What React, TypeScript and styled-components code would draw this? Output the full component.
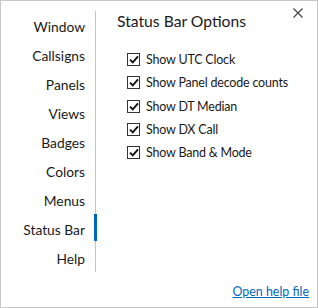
import React, { useState } from 'react'
import styled, { createGlobalStyle } from 'styled-components'

const NAV_ITEMS = [
    'Window',
    'Callsigns',
    'Panels',
    'Views',
    'Badges',
    'Colors',
    'Menus',
    'Status Bar',
    'Help',
]

const OPTIONS = [
    'Show UTC Clock',
    'Show Panel decode counts',
    'Show DT Median',
    'Show DX Call',
    'Show Band & Mode',
]

const GlobalStyle = createGlobalStyle`
    html, body {
        margin: 0;
        padding: 0;
        background: #ffffff;
    }
    body {
        font-family: Lato, "Noto Sans", sans-serif;
        color: #1a1a1a;
    }
`

const Dialog = styled.div`
    box-sizing: border-box;
    width: 318px;
    height: 308px;
    border: 1px solid #c9c9c9;
    display: grid;
    grid-template-columns: 95px 1fr;
    grid-template-rows: 1fr auto;
    position: relative;
    background: #ffffff;
`

const Sidebar = styled.nav`
    display: flex;
    flex-direction: column;
    align-items: stretch;
    margin-top: 10px;
    align-self: start;
    border-right: 1px solid #c4c4c4;
`

const NavItem = styled.div<{ $active: boolean }>`
    box-sizing: border-box;
    position: relative;
    height: 29px;
    display: flex;
    align-items: center;
    justify-content: flex-end;
    padding: 2px 10px 0 0;
    font-size: 13.8px;
    color: #1a1a1a;
    cursor: pointer;

    &::after {
        content: '';
        display: ${props => (props.$active ? 'block' : 'none')};
        position: absolute;
        right: -2px;
        top: 0;
        bottom: 2px;
        width: 3px;
        background: #0067c0;
    }
`

const Content = styled.section`
    padding: 11px 0 0 21px;
`

const Title = styled.h2`
    margin: 0 0 18px;
    font-size: 15.7px;
    font-weight: 400;
    color: #1a1a1a;
`

const OptionList = styled.div`
    display: flex;
    flex-direction: column;
    padding-left: 10px;
`

const OptionRow = styled.label`
    display: flex;
    align-items: center;
    gap: 6px;
    height: 23.3px;
    font-size: 12.5px;
    letter-spacing: -0.2px;
    color: #1a1a1a;
    cursor: pointer;
`

const Box = styled.span<{ $checked: boolean }>`
    box-sizing: border-box;
    width: 13px;
    height: 13px;
    border: 1px solid #333333;
    background: #ffffff;
    display: flex;
    align-items: center;
    justify-content: center;
    flex-shrink: 0;

    svg {
        visibility: ${props => (props.$checked ? 'visible' : 'hidden')};
    }
`

const CloseButton = styled.button`
    position: absolute;
    top: 7px;
    right: 14px;
    width: 10px;
    height: 10px;
    padding: 0;
    border: none;
    background: none;
    display: flex;
    align-items: center;
    justify-content: center;
    cursor: pointer;
`

const Footer = styled.div`
    grid-column: 1 / span 2;
    display: flex;
    justify-content: flex-end;
    padding: 0 8px 8px 0;
`

const HelpLink = styled.a`
    font-size: 12.4px;
    color: #0067c0;
    text-decoration: underline;
    cursor: pointer;
`

export default function App() {
    const [active, setActive] = useState('Status Bar')
    const [checked, setChecked] = useState(OPTIONS.map(() => true))

    const toggle = (i: number) => {
        setChecked(prev => prev.map((v, j) => (j === i ? !v : v)))
    }

    return (
        <>
            <GlobalStyle />
            <Dialog>
                <Sidebar>
                    {NAV_ITEMS.map(item => (
                        <NavItem key={item} $active={item === active} onClick={() => setActive(item)}>
                            {item}
                        </NavItem>
                    ))}
                </Sidebar>
                <Content>
                    <Title>Status Bar Options</Title>
                    <OptionList>
                        {OPTIONS.map((opt, i) => (
                            <OptionRow key={opt} onClick={() => toggle(i)}>
                                <Box $checked={checked[i]}>
                                    <svg width="10" height="9" viewBox="0 0 10 9">
                                        <path d="M1 4.6 L3.8 7.4 L9 1.4" fill="none" stroke="#111" strokeWidth="1.9" />
                                    </svg>
                                </Box>
                                {opt}
                            </OptionRow>
                        ))}
                    </OptionList>
                </Content>
                <CloseButton aria-label="Close">
                    <svg width="10" height="10" viewBox="0 0 10 10">
                        <path d="M0.5 0.5 L9.5 9.5 M9.5 0.5 L0.5 9.5" stroke="#444" strokeWidth="1.2" />
                    </svg>
                </CloseButton>
                <Footer>
                    <HelpLink>Open help file</HelpLink>
                </Footer>
            </Dialog>
        </>
    )
}
